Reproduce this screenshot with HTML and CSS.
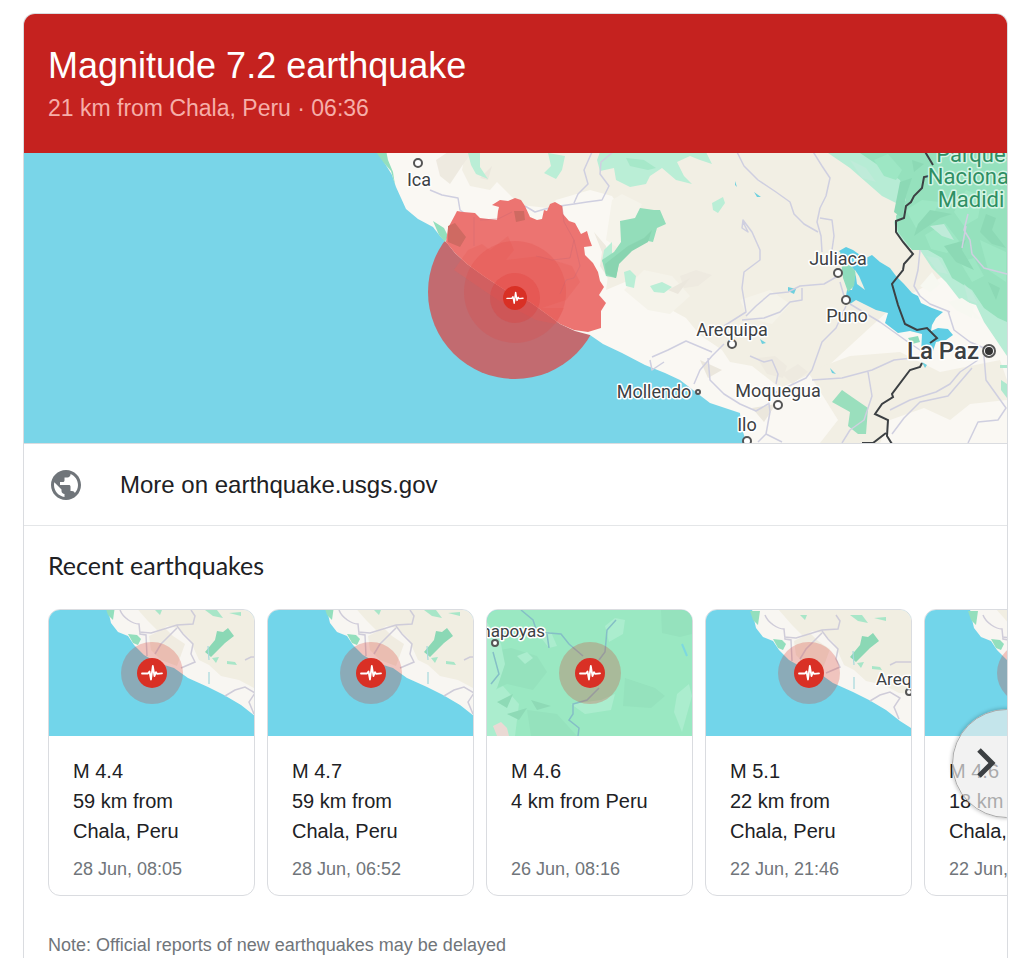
FILE: index.html
```html
<!DOCTYPE html>
<html lang="en">
<head>
  <meta charset="UTF-8">
  <meta name="viewport" content="width=device-width, initial-scale=1.0">
  <title>Magnitude 7.2 earthquake</title>
  <link rel="stylesheet" href="styles.css">
</head>
<body>
  <svg class="defs" width="0" height="0" aria-hidden="true">
    <symbol id="pulse" viewBox="-15 -15 30 30">
      <circle r="15" fill="#d93025"/>
      <path d="M-10 0.5L-4 0.5L-2.5-1.5L-1 6.5L0.8-7L2.5 3L4-0.8L5 0.8L10 0.4" fill="none" stroke="#fff" stroke-width="1.8" stroke-linejoin="round" stroke-linecap="round"/>
    </symbol>
    <symbol id="marker" viewBox="-31 -31 62 62">
      <circle r="31" fill="#d93025" opacity=".25"/>
      <use href="#pulse" x="-15" y="-15" width="30" height="30"/>
    </symbol>
    <g id="coast">
      <path d="M58-6L59 0L62 13L69 22L79 26L85 35L95 45L109 53L125 58L139 68L159 77L175 85L192 95L206 106L222 116L250 120V-6z" fill="#f8f6f2"/>
      <path d="M84-6L98 10L110 22L118 16L128 18L140 28L150 50L160 55L172 66L190 70L205 78L250 80V-6z" fill="#f1eee2"/>
      <path d="M100 26l16-8 8 8 12 8-8 22-16-6-10-10z" fill="#f0ece1"/>
      <path d="M56-4L59 5L64 10L66-4zM79 24L88 25L92 29L89 35L84 33z" fill="#93dfbd"/>
      <path d="M156 42L166 30L168 21L174 22L179 18L185 26L176 33L162 47z" fill="#8bd8b5"/>
      <path d="M156 0l8 6 10 2-6-8zM180 3l12 3v-4zM106 0l5 5 2-5zM163 48l7-1-3 6zM178 51l8 1 2 3-10-1z" fill="#a8e6c8"/>
      <path d="M159 36L160 50M160 62V74" fill="none" stroke="#a5d9dc" stroke-width="1.2"/>
      <path d="M71 0C74 8 84 14 90 14L91 24L97 25L98 46M90 22L102 23L128 15L144 14L146 6L142 0M128 16L134 24L144 34L142 44L146 52L132 58M128 18L112 34L106 44M176 86L186 80L196 77L206 83L200 92L205 104M196 50l6-3h22" fill="none" stroke="#cfccd9" stroke-width="1.5"/>
    </g>
  </svg>

  <main class="panel">
    <header class="header">
      <h1>Magnitude 7.2 earthquake</h1>
      <p>21 km from Chala, Peru · 06:36</p>
    </header>

    <svg class="map" viewBox="24 153 983 290" preserveAspectRatio="xMidYMid slice" role="img" aria-label="Map of the shaking area">
      <rect x="24" y="153" width="983" height="290" fill="#79d5e8"/>
      <circle cx="515" cy="292" r="87" fill="#c26b70"/>

      <!-- land -->
      <path d="M378 150L384 162L392 175L396 187L401 198L406 209L418 219L433 227L440 236L447 243L455 253L467 264L485 277L505 290L530 302L548 315L560 324L575 331L590 335L603 344L622 353L645 365L665 373L680 380L693 390L710 403L740 413L741 425L747 445H1010V150z" fill="#faf8f3"/>
      <path d="M466 150L462 170L470 186L490 190L497 182L520 205L548 208L556 200L590 190L612 196L624 214L612 236L610 262L606 290L625 282L650 290L664 306L686 318L700 335L722 350L730 362L752 366L780 388L828 366L900 300L1010 240V150z" fill="#f2efe4"/>
      <path d="M808 372L850 356L900 352L940 372L1000 360L1007 380V400L970 404L950 420L924 408L890 420L880 443H820L838 420z" fill="#f2efe4"/>
      <path d="M612 200l10-6 20 10-10 22-14 22-12-8zM624 290l20-20 28 6 18 20-20 18-22-4zM740 300l30-10 20 14-18 20-24-6z" fill="#f5f3ea"/>
      <path d="M680 276l16-6 16 5-14 11-14 2zM594 232l8 20-2 14 8 12 4-10-6-22zM757 358l18-2 12 10-4 12-16-4zM436 160l12-8h24l-10 14-12 18-10-8zM782 374l16-10 10 8-16 12z" fill="#eeeae0"/>
      <path d="M668 290l22-12-12 16zM480 178l12-12-4 14zM700 360l22 10-14 8zM752 408l24-4-12 18z" fill="#ebe7dd"/>

      <!-- parks and forest -->
      <path d="M376 152L384 163L391 171L395 185L393 172L388 160L386 150zM433 221L444 228L448 236L445 242L439 235z" fill="#93dfbd"/>
      <path d="M468 153L480 152L480 167L488 179L476 174L471 165zM548 153L565 156L562 170L556 179L544 173L551 166zM600 152H706L712 164L700 160L690 156L677 162L684 176L692 184L676 180L662 168L650 176L646 184L630 187L616 180L614 168L600 171L597 160zM712 203l11-6 2 6-7 10-5-3zM604 250l8-8 0 18-10 2zM630 270l6 6-2 12-8-2-2-14zM650 286l12-4 10 5-8 6-10-1z" fill="#baeed6"/>
      <path d="M626 158l18 2 12 8-8 2-18-4z" fill="#a6e8c9"/>
      <path d="M620 221L635 218L640 208L654 210L660 210L666 224L657 228L653 242L643 240L630 252L619 262L616 278L606 276L602 260L614 252L621 242z" fill="#93ddba"/>
      <path d="M605 264L628 246L644 238L652 230L648 242L632 251L619 264L616 278L606 274z" fill="#89d4b0"/>
      <path d="M832 402L842 390L852 397L868 408L866 434L858 434L848 426L850 412z" fill="#9adfbd"/>
      <path d="M828 153L850 168L882 196L904 207L894 222L896 232L908 247L920 250L932 268L946 282L960 300L976 305L984 322L1007 356V150H828z" fill="#b7ecd5"/>
      <path d="M860 153L900 180L906 200L896 216L898 232L912 250L928 250L942 258L952 278L972 290L984 308L998 318L1007 322V150H856z" fill="#95e1bd"/>
      <path d="M874 160l14-6 14 16-6 10-12-4zM906 210l16-10 18 2-8 14-16 12zM966 190l16 6-4 22-14 8-10-14zM925 235l20-12 14 18-12 12-16-4zM980 240l26 12v30l-18-12zM960 262l14-4 10 18-12 6z" fill="#9de7c4"/>
      <path d="M930 226l14-2 10 16-12-4zM850 160l16 8 10 14-14-4zM926 256l12 2 10 16-10-2zM964 284l8 8 6 12-10-4z" fill="#bfebd9"/>
      <path d="M900 182l12-4-6 18-4 22-8-6zM930 210l22 4-12 4-26 18 4-12zM944 246l22-6-4 10 12 20-18-8zM986 214l10 4-4 12 14 18-14-4-12-12zM988 282l12 6-4 12zM912 160l12 4-10 8z" fill="#8cd9b5"/>
      <path d="M948 302l14-4 12 8-2 12-16-8zM972 310l10 10-8-2zM920 286l12-14 8 12-10 8z" fill="#f7f8f1"/>
      <path d="M1001 380l6 4v14l-6-8zM1000 365h7v3h-7z" fill="#aee8ce"/>

      <!-- lakes -->
      <path d="M839 251L846 247L853 250L860 255L866 258L872 255L880 262L890 268L896 276L904 284L912 293L918 296L921 303L932 308L943 312L936 318L932 325L931 331L938 328L948 329L953 335L946 340L936 342L932 354L921 354L922 334L910 331L898 333L885 323L888 313L876 310L862 303L856 300L850 304L846 296L847 290L852 290L856 272L846 260z" fill="#5fcde4"/>
      <path d="M840 252l6 8 10 12-2 14-6 6-5-14zM908 338l10-2 2 6-8 2z" fill="#8edcbc"/>
      <path d="M855 270l4 6 6 14-8-6z" fill="#eef0e4"/>
      <path d="M788 287l8 2-2 5-6-3zM735 181l2 6-2-2zM754 192l7 5-4 0zM830 368l6 6-4-1zM760 339l6 4-4 1zM922 362l5 3-2 3z" fill="#6fd0de"/>

      <!-- roads -->
      <g class="road">
        <path d="M430 190L442 195L458 198L460 210L470 217M525 206L535 212L545 209L560 206L574 204L587 202L602 200L609 186L600 174L601 162L612 153M574 203L578 194L588 184L584 170L592 152"/>
        <path d="M736 150L744 166L758 180L776 192L790 202L794 214L804 224L818 232M812 150L822 166L830 178L826 196L820 208L817 222L821 236L822 252M820 218L832 220L834 236L832 250"/>
        <path d="M743 222L748 232L742 228L743 220L752 232L760 250L760 260L744 272L742 288L746 312L724 326M746 316L756 306L770 294L788 292L800 286L824 284L838 276M742 320L764 318L780 312L790 302L802 300L802 288M840 282L844 296"/>
        <path d="M846 306L836 328L822 342L812 370L806 378L768 396L770 412L766 434L758 442M766 434L782 442M724 344L712 356L700 370L694 384M708 358L710 380L724 394L740 404L756 411L768 404M650 360L652 370L664 362M652 357L668 350L686 341L712 352"/>
        <path d="M812 380L842 378L872 370L894 360L912 358M868 372L872 396L864 420L850 430L842 443M850 304L880 322L908 342L920 350M948 311L954 330L970 342L984 348M978 360L960 372L950 384L936 392L910 400L890 410M972 368L948 396L920 402L904 418L892 434M984 356L986 380L1006 408L998 420L978 422L968 443"/>
        <path d="M968 214L964 230L970 240L972 254L984 268L1007 274M966 226L962 248M920 250L918 270L914 286L920 296L930 304L950 312M750 356l14 6 8-2 6 14-2 10"/>
      </g>
      <path class="border" d="M924 150L933 165M929 176L924 177L922 188L914 196L911 202L906 206L904 218L896 221L896 232L903 242L913 254L904 264L903 270L892 284L898 305L905 324L917 330L927 328L937 338L930 343M922 363L920 367L910 370L892 394L893 397L882 404L875 414L888 420L887 436L892 444M886 433L873 443L862 443"/>

      <!-- shaking area -->
      <path d="M446 242L448 228L455 215L457 211L463 212L475 213L480 218L497 220L498 211L499 207L492 205L500 200L508 201L515 198L521 200L525 206L530 217L537 220L542 219L544 210L547 211L550 204L555 202L562 206L563 214L569 221L575 223L581 234L587 231L589 238L592 246L584 247L585 255L593 263L598 272L600 281L604 287L599 295L606 303L601 311L601 328L588 332L574 330L560 324L548 315L530 302L505 290L485 277L467 264L455 253z" fill="#ec7471"/>
      <path d="M448 226L455 223L466 237L460 247L448 242zM514 211l10 0 1 9-9 2z" fill="#cf6a62"/>
      <path d="M468 250l14-6 8 6 18-14 6 14-8 10 34-4 32 10 8 16-14 18-24 8 22 0-8 16-20-4-38-20-44-30z" fill="#e9605c" opacity=".35"/>
      <path d="M474 217V246M480 220L498 219L512 212M562 206L564 222L574 240L570 258L552 260L536 256M574 240L580 266L574 278L566 280L560 294" fill="none" stroke="#cf6a74" opacity=".5"/>
      <circle cx="515" cy="292" r="51" fill="#e3413b" opacity=".2"/>
      <circle cx="515" cy="298" r="25" fill="#e0342f" opacity=".25"/>
      <use href="#pulse" x="503" y="286" width="24" height="24"/>

      <g class="town">
        <circle cx="418" cy="163" r="4"/>
        <circle cx="838" cy="273" r="4"/>
        <circle cx="846" cy="300" r="4"/>
        <circle cx="732" cy="344" r="4"/>
        <circle cx="778" cy="405" r="4"/>
        <circle cx="747" cy="441" r="4"/>
        <circle cx="698" cy="392" r="2"/>
        <circle cx="989" cy="351" r="6"/>
      </g>
      <circle cx="989" cy="351" r="4" fill="#333"/>
      <g class="label">
        <text x="419" y="186">Ica</text>
        <text x="838" y="265">Juliaca</text>
        <text x="847" y="322">Puno</text>
        <text x="732" y="336">Arequipa</text>
        <text x="778" y="397">Moquegua</text>
        <text x="654" y="398">Mollendo</text>
        <text x="747" y="431">Ilo</text>
        <text class="capital" x="943" y="359">La Paz</text>
        <text class="park" x="971" y="162">Parque</text>
        <text class="park" x="971" y="184">Nacional</text>
        <text class="park" x="971" y="207">Madidi</text>
      </g>
    </svg>

    <a class="more" href="#usgs">
      <svg viewBox="0 0 24 24" width="36" height="36" fill="#70757a" aria-hidden="true">
        <path d="M12 2C6.48 2 2 6.48 2 12s4.48 10 10 10 10-4.48 10-10S17.52 2 12 2zm-1 17.93c-3.95-.49-7-3.85-7-7.93 0-.62.08-1.21.21-1.79L9 15v1c0 1.1.9 2 2 2v1.93zm6.9-2.54c-.26-.81-1-1.39-1.9-1.39h-1v-3c0-.55-.45-1-1-1H8v-2h2c.55 0 1-.45 1-1V7h2c1.1 0 2-.9 2-2v-.41c2.93 1.19 5 4.06 5 7.41 0 2.08-.8 3.97-2.1 5.39z"/>
      </svg>
      <span>More on earthquake.usgs.gov</span>
    </a>

    <section class="recent">
      <h2>Recent earthquakes</h2>
      <div class="carousel">
        <ul class="cards">
          <li class="card">
            <svg class="thumb" viewBox="0 0 205 126" preserveAspectRatio="xMidYMid slice" aria-hidden="true">
              <use href="#coast"/>
              <use href="#marker" x="72" y="32" width="62" height="62"/>
            </svg>
            <div class="info">
              <h3>M 4.4</h3>
              <p class="place">59 km from Chala, Peru</p>
              <p class="date">28 Jun, 08:05</p>
            </div>
          </li>
          <li class="card">
            <svg class="thumb" viewBox="0 0 205 126" preserveAspectRatio="xMidYMid slice" aria-hidden="true">
              <use href="#coast"/>
              <use href="#marker" x="72" y="32" width="62" height="62"/>
            </svg>
            <div class="info">
              <h3>M 4.7</h3>
              <p class="place">59 km from Chala, Peru</p>
              <p class="date">28 Jun, 06:52</p>
            </div>
          </li>
          <li class="card">
            <svg class="thumb" viewBox="0 0 205 126" preserveAspectRatio="xMidYMid slice" aria-hidden="true">
              <rect width="205" height="126" fill="#9ae8c2"/>
              <path d="M174 0h31v24l-12 3-18-4zM138 68l30 10 10 8-14 12-28-2zM0 42l24-4 26 8 10 16-14 18-26-6-20 8zM40 100l30 4 20 22H44z" fill="#95e2bd"/>
              <path d="M0 12l14 22 4 20-8 24L0 90zM30 46l10-4 6 6-8 6zM118 16l10-8 10 2-2 14-14 8zM48 20l16 2 6 14-8 2zM0 84l16-8 16 18-4 32H0zM84 94l30-4 14-6-4 16-26 4zM190 84l12-10 3 12-10 36-8-20z" fill="#abedce"/>
              <path d="M6 116l8-4 6 6 2 8H10z" fill="#ead9d4"/>
              <path d="M20 104l20-6-8 12zM44 90l20 6-14 4zM10 92l16-8-6 14z" fill="#8edab6"/>
              <path d="M34 0L46 10L50 22L74 24L82 34L96 46M129 10L120 20L118 42L112 50M60 24L62 38M112 78L100 90L86 94L86 104L82 110L92 118L91 126M6 42L12 64L4 74" fill="none" stroke="#84bfc6" stroke-width="1.5"/>
              <path d="M195 34l5 12" stroke="#7dd8e0" stroke-width="2"/>
              <g class="town"><circle cx="8" cy="33" r="3"/></g>
              <g class="label"><text class="end" x="58" y="27">Chachapoyas</text></g>
              <use href="#marker" x="72" y="32" width="62" height="62"/>
            </svg>
            <div class="info">
              <h3>M 4.6</h3>
              <p class="place">4 km from Peru</p>
              <p class="date">26 Jun, 08:16</p>
            </div>
          </li>
          <li class="card">
            <svg class="thumb" viewBox="0 0 205 126" preserveAspectRatio="xMidYMid slice" aria-hidden="true">
              <use href="#coast" x="-12" y="5"/>
              <g class="town"><circle cx="203" cy="82" r="3"/></g>
              <g class="label"><text class="start" x="170" y="75">Arequipa</text></g>
              <use href="#marker" x="72" y="32" width="62" height="62"/>
            </svg>
            <div class="info">
              <h3>M 5.1</h3>
              <p class="place">22 km from Chala, Peru</p>
              <p class="date">22 Jun, 21:46</p>
            </div>
          </li>
          <li class="card">
            <svg class="thumb" viewBox="0 0 205 126" preserveAspectRatio="xMidYMid slice" aria-hidden="true">
              <use href="#coast" x="-13" y="5"/>
              <use href="#marker" x="72" y="32" width="62" height="62"/>
            </svg>
            <div class="info">
              <h3>M 4.6</h3>
              <p class="place">18 km from Chala, Peru</p>
              <p class="date">22 Jun, 20:31</p>
            </div>
          </li>
        </ul>
        <button class="next" type="button" aria-label="Next">
          <svg viewBox="0 0 20 32" width="20" height="32" aria-hidden="true">
            <path d="M3 3L16 16L3 29" fill="none" stroke="#3c4043" stroke-width="5"/>
          </svg>
        </button>
      </div>
      <p class="note">Note: Official reports of new earthquakes may be delayed</p>
    </section>
  </main>

  <script>
    const cards = document.querySelector('.cards')
    const next = document.querySelector('.next')

    next.onclick = function() {
      cards.scrollBy({ left: 219, behavior: 'smooth' })
    }
  </script>
</body>
</html>
```
FILE: styles.css
```css
* {
  box-sizing: border-box;
}
body {
  display: flex;
  min-height: 100vh;
  margin: 0;
  padding: 13px 16px 0 23px;
  background: #fff;
  color: #202124;
  font-family: Arial, "Liberation Sans", sans-serif;
}
h1, h2, h3, p, ul {
  margin: 0;
  padding: 0;
  font-weight: normal;
}
.defs {
  position: absolute;
}

.panel {
  flex: 1;
  min-width: 0;
  border: 1px solid #dadce0;
  border-bottom: none;
  border-radius: 12px 12px 0 0;
  overflow: hidden;
}

.header {
  padding: 30px 24px 29px;
  background: #c5221f;
  color: #fff;
}
.header h1 {
  font-size: 36px;
  line-height: 44px;
}
.header p {
  margin-top: 4px;
  color: #f6aea9;
  font-size: 23px;
  line-height: 32px;
}

.map {
  display: block;
  width: 100%;
  height: 290px;
}
.road {
  fill: none;
  stroke: #cfcfe0;
  stroke-width: 1.5;
  stroke-linejoin: round;
}
.border {
  fill: none;
  stroke: #3c4043;
  stroke-width: 2;
}
.town {
  fill: #fff;
  stroke: #555;
  stroke-width: 2;
}
.label {
  fill: #3c4043;
  stroke: #fff;
  stroke-width: 3px;
  stroke-linejoin: round;
  paint-order: stroke;
  font-family: Roboto, sans-serif;
  font-size: 18px;
  text-anchor: middle;
}
.label .capital {
  font-size: 24px;
  font-weight: 500;
}
.label .park {
  fill: #2f8f63;
  stroke: #d5f5e6;
  font-size: 22px;
}
.label .start {
  font-size: 17px;
  text-anchor: start;
}
.label .end {
  font-size: 17px;
  text-anchor: end;
}

.more {
  display: flex;
  align-items: center;
  gap: 36px;
  padding: 23px 24px 22px;
  border-top: 1px solid #dadce0;
  border-bottom: 1px solid #e4e6e8;
  color: #202124;
  font-size: 24px;
  line-height: 36px;
  text-decoration: none;
}

.recent h2 {
  padding: 23px 24px 28px;
  font-family: "Google Sans", Lato, sans-serif;
  font-size: 25px;
  line-height: 32px;
}
.carousel {
  position: relative;
  overflow: hidden;
}
.cards {
  display: flex;
  gap: 12px;
  padding: 0 24px;
  overflow: hidden;
  list-style: none;
}
.card {
  display: flex;
  flex-direction: column;
  flex: 0 0 207px;
  border: 1px solid #dadce0;
  border-radius: 12px;
  overflow: hidden;
}
.thumb {
  display: block;
  width: 100%;
  height: 126px;
  background: #72d5ea;
}
.info {
  display: flex;
  flex: 1;
  flex-direction: column;
  padding: 20px 24px 14px;
  font-size: 20px;
  line-height: 30px;
}
.info h3 {
  font-size: 20px;
}
.date {
  margin-top: auto;
  padding-top: 11px;
  color: #70757a;
  font-size: 18px;
  line-height: 24px;
}

.next {
  position: absolute;
  top: 50%;
  right: -54px;
  display: flex;
  align-items: center;
  width: 109px;
  height: 109px;
  padding: 0 0 0 23px;
  border: 1px solid #aaa;
  border-radius: 50%;
  background: rgba(236, 236, 236, .68);
  box-shadow: 0 0 4px rgba(0, 0, 0, .3);
  transform: translateY(-44px);
  cursor: pointer;
}

.note {
  padding: 37px 24px 0;
  color: #70757a;
  font-size: 18px;
  line-height: 24px;
}
```
